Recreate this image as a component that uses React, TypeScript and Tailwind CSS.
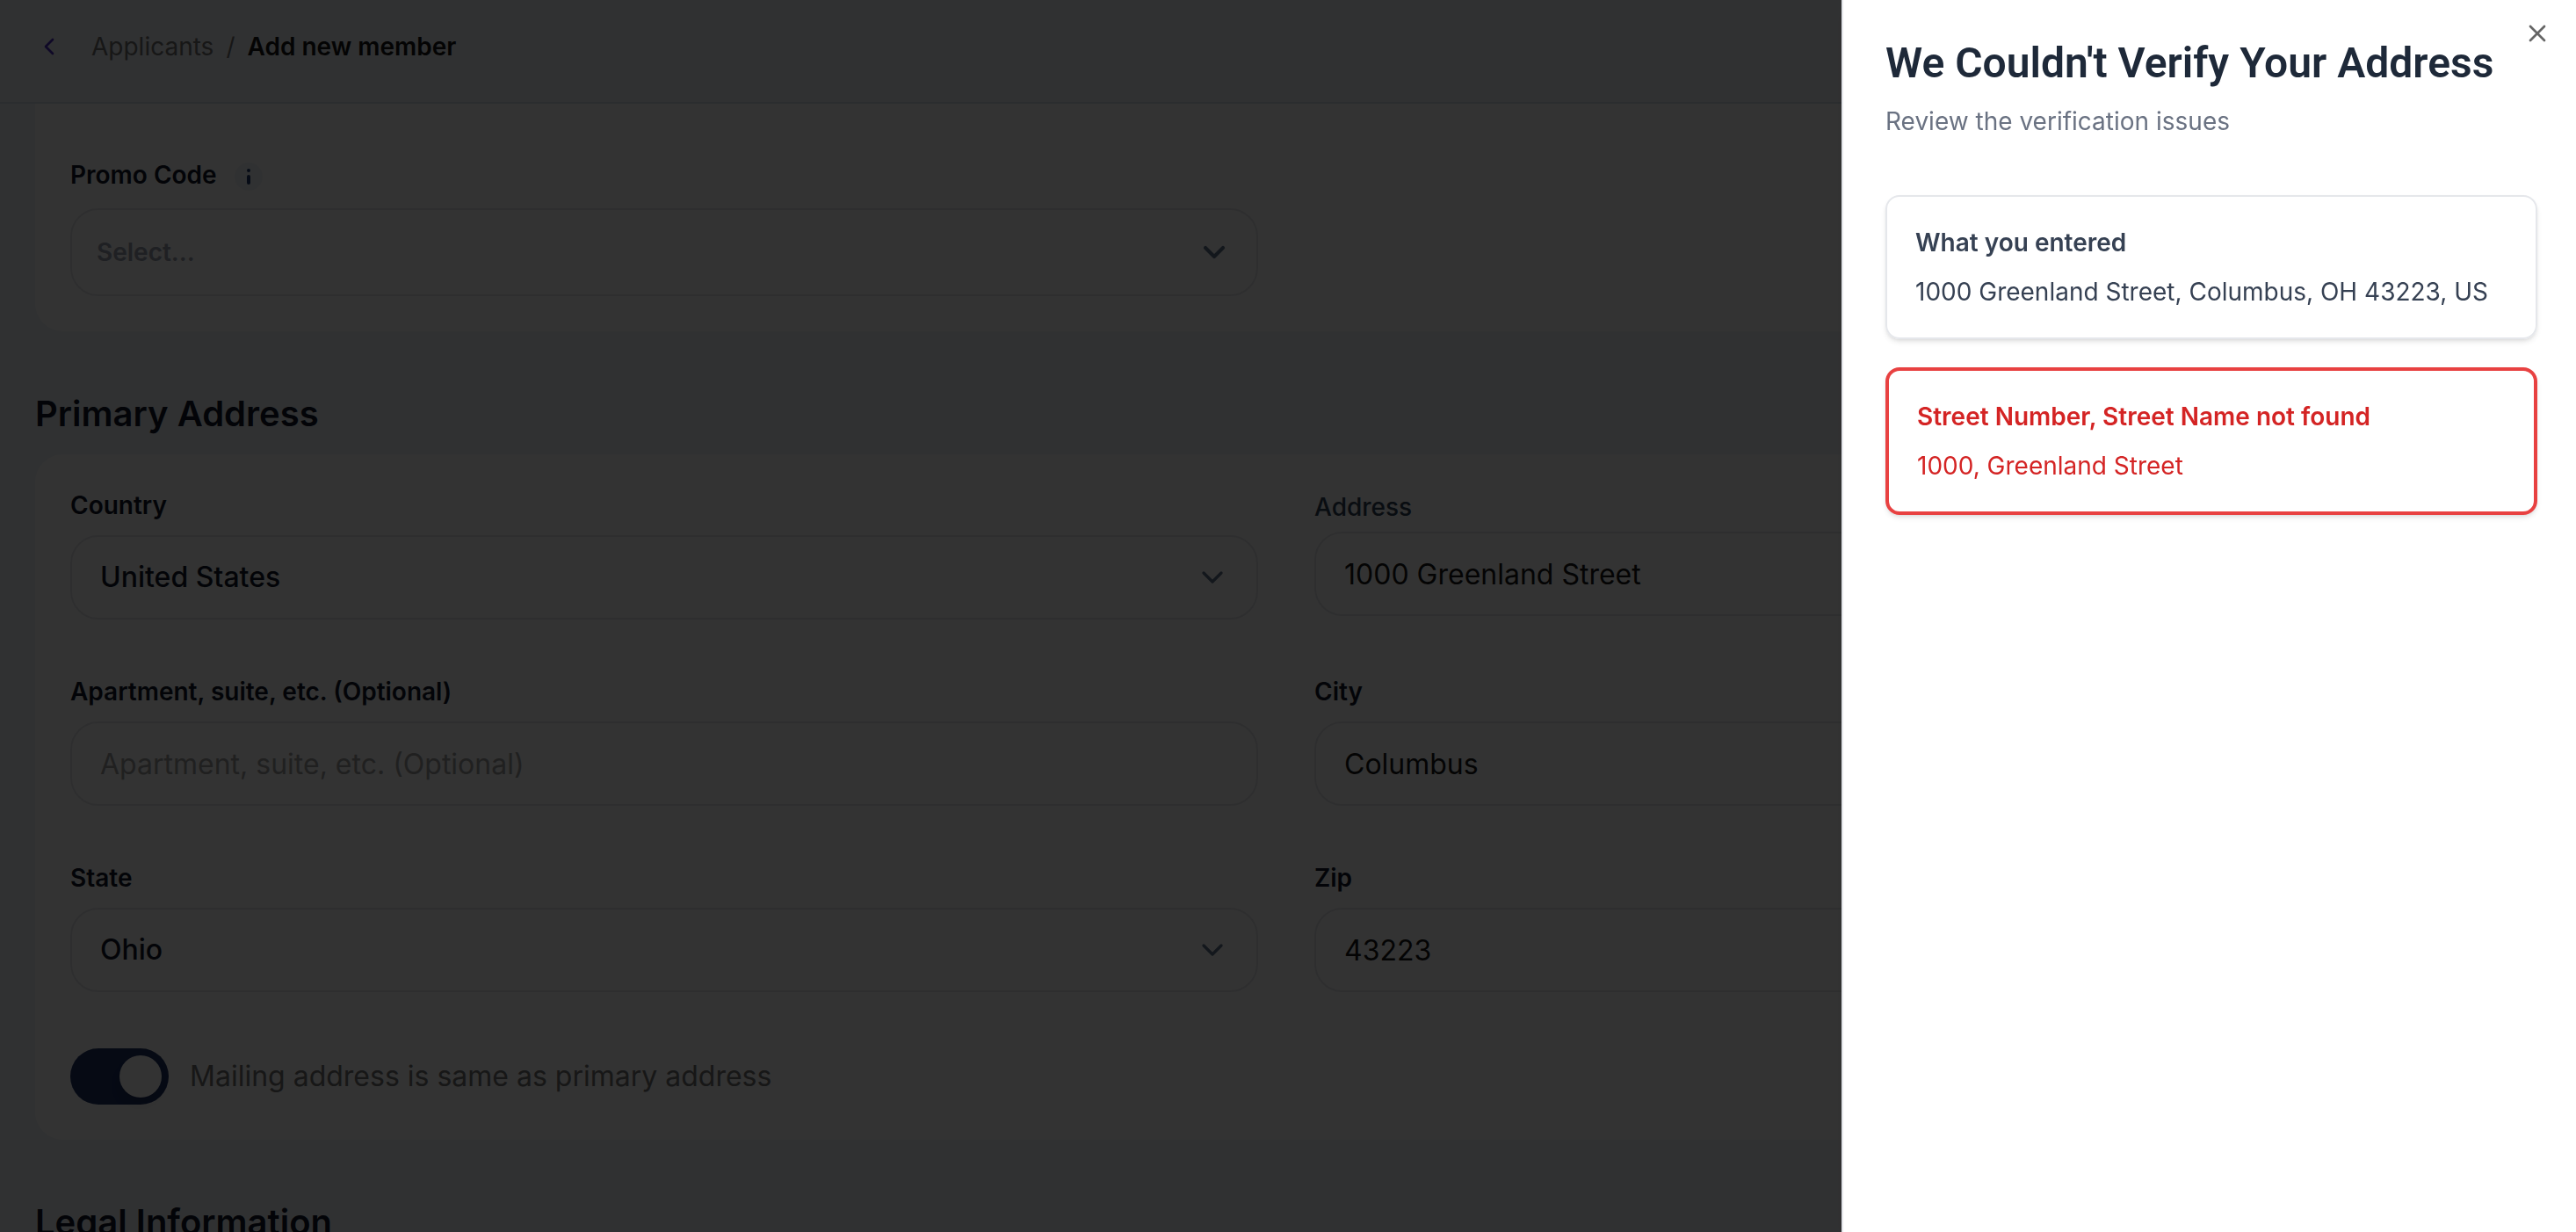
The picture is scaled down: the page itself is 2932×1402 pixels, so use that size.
import { useState } from "react";
import type { ReactNode } from "react";
import { ChevronDown, ChevronLeft, X } from "lucide-react";
import clsx from "clsx";

const LABEL = "text-[28px] leading-9 font-semibold text-gray-900";
const BOX = "w-full rounded-[32px] border-2 border-gray-200 bg-white px-8 outline-none";

function TextField({
  id,
  label,
  value,
  placeholder,
  plainLabel = false,
}: {
  id: string;
  label: string;
  value?: string;
  placeholder?: string;
  plainLabel?: boolean;
}) {
  return (
    <div className={clsx("flex flex-col", plainLabel ? "gap-2" : "gap-4")}>
      <label
        htmlFor={id}
        className={plainLabel ? "text-[28px] leading-10 font-medium text-slate-700" : LABEL}
      >
        {label}
      </label>
      <input
        id={id}
        type="text"
        defaultValue={value}
        placeholder={placeholder}
        className={clsx(BOX, "h-24 text-[32px] text-neutral-900 placeholder:text-neutral-400")}
      />
    </div>
  );
}

function SelectField({ id, label, options }: { id: string; label: string; options: string[] }) {
  return (
    <div className="flex flex-col gap-4">
      <label htmlFor={id} className={LABEL}>
        {label}
      </label>
      <div className="grid items-center">
        <select
          id={id}
          className={clsx(BOX, "col-start-1 row-start-1 h-24 appearance-none text-[32px] font-medium text-gray-900")}
        >
          {options.map((o) => (
            <option key={o}>{o}</option>
          ))}
        </select>
        <ChevronDown
          className="col-start-1 row-start-1 mr-8 justify-self-end size-10 text-slate-500 pointer-events-none"
          strokeWidth={2}
        />
      </div>
    </div>
  );
}

function SectionHeading({ children }: { children: ReactNode }) {
  return <h2 className="mt-16 mb-4 text-[40px] leading-[60px] font-semibold text-gray-900">{children}</h2>;
}

function IssueCard({ title, text, error = false }: { title: string; text: string; error?: boolean }) {
  return (
    <div
      className={clsx(
        "flex flex-col gap-4 rounded-2xl p-8 text-[28px] leading-10 shadow-md",
        error ? "border-4 border-[#e84141] text-[#d42424]" : "border-2 border-gray-200 text-gray-700"
      )}
    >
      <h3 className="font-semibold">{title}</h3>
      <p>{text}</p>
    </div>
  );
}

export default function App() {
  const [sameAddress, setSameAddress] = useState(true);

  return (
    <div className="h-screen overflow-hidden bg-slate-100 font-[Inter,sans-serif]">
      <header className="flex h-[118px] items-start border-b-2 border-slate-300/70 px-10 pt-8">
        <nav className="flex items-center text-[28px] leading-[42px]">
          <button type="button" aria-label="Back" className="mr-8 text-[#4c2ec0]">
            <ChevronLeft className="size-8" strokeWidth={2} />
          </button>
          <a href="#applicants" className="text-neutral-500">Applicants</a>
          <span className="mx-3.5 text-neutral-500">/</span>
          <span className="font-semibold text-neutral-900">Add new member</span>
        </nav>
      </header>

      <main className="pr-11 pl-10">
        <section className="rounded-b-[32px] bg-white px-10 pt-[63px] pb-10">
          <div className="grid grid-cols-2 gap-x-16">
            <div className="flex flex-col gap-4">
              <div className="flex h-10 items-start gap-5">
                <label htmlFor="promo" className={LABEL}>
                  Promo Code
                </label>
                <button
                  type="button"
                  aria-label="About promo codes"
                  className="flex size-8 items-center justify-center self-center rounded-full bg-slate-100"
                >
                  <svg viewBox="0 0 32 32" className="size-8">
                    <circle cx="16" cy="9" r="2" fill="#1e3a6e" />
                    <rect x="14" y="14" width="4" height="11" rx="2" fill="#1e3a6e" />
                  </svg>
                </button>
              </div>
              <div className="grid items-center">
                <select
                  id="promo"
                  className="col-start-1 row-start-1 h-25 w-full appearance-none rounded-[32px] border-2 border-gray-200 bg-white px-7 text-[28px] font-semibold text-gray-400 outline-none"
                >
                  <option>Select...</option>
                </select>
                <ChevronDown
                  className="col-start-1 row-start-1 mr-[30px] justify-self-end size-10 text-slate-500 pointer-events-none"
                  strokeWidth={2.5}
                />
              </div>
            </div>
          </div>
        </section>

        <SectionHeading>Primary Address</SectionHeading>
        <section className="rounded-[32px] bg-white p-10">
          <div className="grid grid-cols-2 gap-16">
            <SelectField id="country" label="Country" options={["United States"]} />
            <TextField id="address" label="Address" value="1000 Greenland Street" plainLabel />
            <TextField
              id="apartment"
              label="Apartment, suite, etc. (Optional)"
              placeholder="Apartment, suite, etc. (Optional)"
            />
            <TextField id="city" label="City" value="Columbus" />
            <SelectField id="state" label="State" options={["Ohio"]} />
            <TextField id="zip" label="Zip" value="43223" />
          </div>
          <div className="mt-16 flex items-center gap-6">
            <button
              id="same"
              type="button"
              role="switch"
              aria-checked={sameAddress}
              onClick={() => setSameAddress(!sameAddress)}
              className={clsx(
                "flex h-16 w-28 items-center rounded-full p-2",
                sameAddress ? "justify-end bg-[#1e3264]" : "justify-start bg-gray-300"
              )}
            >
              <span className="size-12 rounded-full bg-white shadow-lg" />
            </button>
            <label htmlFor="same" className="text-[32px] leading-10 text-neutral-500">
              Mailing address is same as primary address
            </label>
          </div>
        </section>

        <SectionHeading>Legal Information</SectionHeading>
      </main>

      <div className="fixed inset-0 bg-black/80" />

      <aside
        role="dialog"
        aria-labelledby="dialog-title"
        className="fixed inset-y-0 right-0 w-full max-w-[836px] border-l-2 border-gray-200 bg-white pt-11 pr-11 pl-12 shadow-lg"
      >
        <button type="button" aria-label="Close" className="absolute top-[22px] right-7 text-[#666666]">
          <X className="size-8" strokeWidth={2} />
        </button>
        <h1
          id="dialog-title"
          className="font-[Roboto,sans-serif] text-5xl leading-14 font-semibold whitespace-nowrap text-gray-800"
        >
          We Couldn't Verify Your Address
        </h1>
        <p className="mt-5 text-[28px] leading-9 text-gray-500">Review the verification issues</p>
        <div className="mt-[66px] flex flex-col gap-8">
          <IssueCard title="What you entered" text="1000 Greenland Street, Columbus, OH 43223, US" />
          <IssueCard title="Street Number, Street Name not found" text="1000, Greenland Street" error />
        </div>
      </aside>
    </div>
  );
}
